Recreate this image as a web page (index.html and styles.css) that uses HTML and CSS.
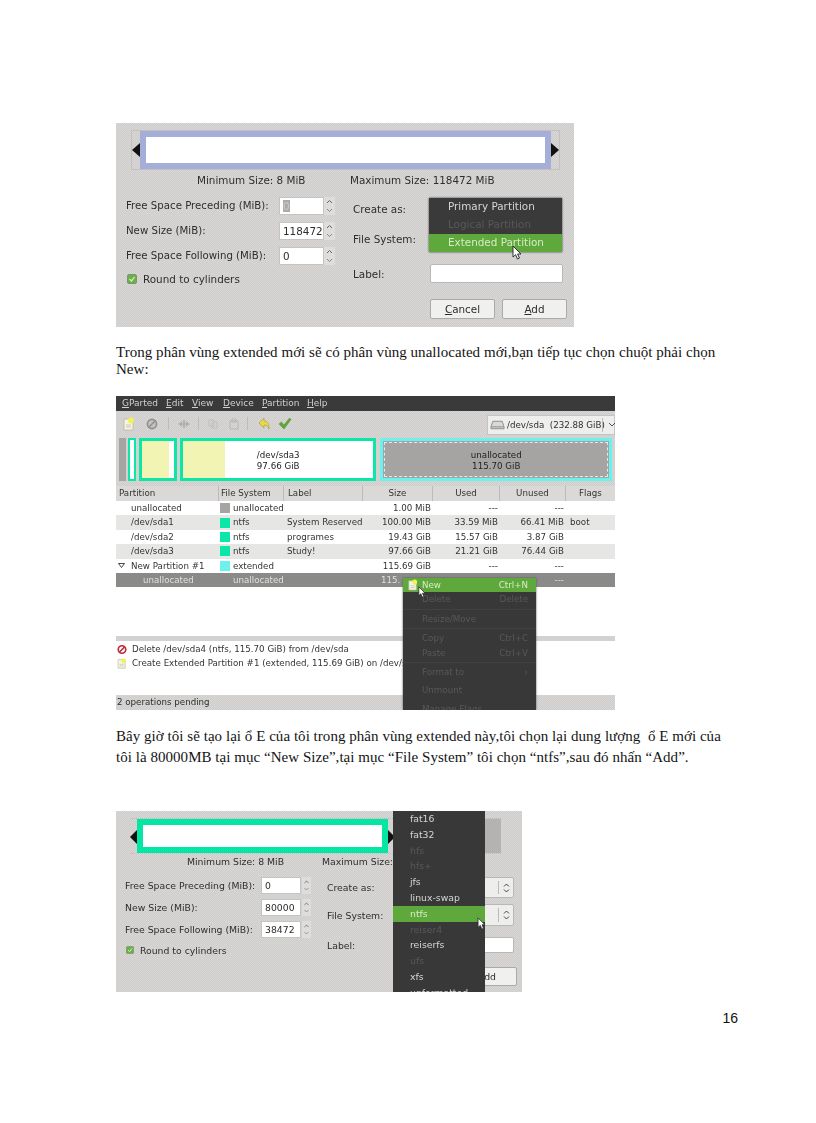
FILE: index.html
```html
<!DOCTYPE html>
<html lang="vi">
<head>
<meta charset="utf-8">
<title>Trang 16</title>
<link rel="stylesheet" href="styles.css">
</head>
<body>
<svg class="defs" width="0" height="0" aria-hidden="true">
  <symbol id="i-new" viewBox="0 0 12 14"><path d="M1 2h9v11H1z" fill="#f6f4e4" stroke="#b8b6a0" stroke-width=".8"/><circle cx="8" cy="3.500" r="3" fill="#f0f25a"/><path d="M3 8h5M3 10h5" stroke="#c9c7b0"/></symbol>
  <symbol id="i-cur" viewBox="0 0 10 15"><path d="M1 1v11l2.600-2.300 1.800 4.300 2-.9-1.800-4.100H9z" fill="#fff" stroke="#222" stroke-width=".9"/></symbol>
  <symbol id="i-check" viewBox="0 0 10 10"><rect x=".5" y=".5" width="9" height="9" rx="1.500" fill="#6cb04a" stroke="#79956b"/><path d="M2.500 5l2 2 3-4" fill="none" stroke="#d8efc8" stroke-width="1.200"/></symbol>
  <symbol id="i-spin" viewBox="0 0 11 18"><path d="M3 6l2.500-2.500L8 6" fill="none" stroke="#666"/><path d="M3 12l2.500 2.500L8 12" fill="none" stroke="#888"/></symbol>
</svg>

<section class="shot shot-a">
  <div class="bar-frame">
    <span class="arr arr-l"></span>
    <div class="part-blue"></div>
    <span class="arr arr-r"></span>
  </div>
  <div class="sizes">
    <span class="size-min">Minimum Size: 8 MiB</span>
    <span>Maximum Size: 118472 MiB</span>
  </div>
  <div class="form">
    <div class="col-left">
      <div class="spin-row"><span class="spin-label">Free Space Preceding (MiB):</span><span class="num"><span class="sel">0</span></span><svg class="spin"><use href="#i-spin"/></svg></div>
      <div class="spin-row"><span class="spin-label">New Size (MiB):</span><span class="num">118472</span><svg class="spin"><use href="#i-spin"/></svg></div>
      <div class="spin-row"><span class="spin-label">Free Space Following (MiB):</span><span class="num">0</span><svg class="spin"><use href="#i-spin"/></svg></div>
      <div class="check-row"><svg class="chk"><use href="#i-check"/></svg>Round to cylinders</div>
    </div>
    <div class="col-right">
      <div class="r-row r-create">Create as:</div>
      <div class="r-row r-file">File System:</div>
      <div class="r-row r-label"><span class="r-name">Label:</span><span class="entry"></span></div>
      <div class="btns"><span class="btn"><u>C</u>ancel</span><span class="btn"><u>A</u>dd</span></div>
      <div class="pop">
        <div class="pop-item">Primary Partition</div>
        <div class="pop-item dim">Logical Partition</div>
        <div class="pop-item on">Extended Partition</div>
        <svg class="cursor"><use href="#i-cur"/></svg>
      </div>
    </div>
  </div>
</section>

<p class="para para-a">Trong phân vùng extended mới sẽ có phân vùng unallocated mới,bạn tiếp tục chọn chuột phải chọn New:</p>

<section class="shot shot-b">
  <nav class="menubar"><span><u>G</u>Parted</span><span><u>E</u>dit</span><span><u>V</u>iew</span><span><u>D</u>evice</span><span><u>P</u>artition</span><span><u>H</u>elp</span></nav>
  <div class="toolbar">
    <svg class="t-new"><use href="#i-new"/></svg>
    <svg class="t-no" viewBox="0 0 12 12"><circle cx="6" cy="6" r="4.600" fill="#c4c3c1" stroke="#8e8e8c" stroke-width="1.600"/><path d="M3 9l6-6" stroke="#8e8e8c" stroke-width="1.400"/></svg>
    <i class="t-sep"></i>
    <svg class="t-rs" viewBox="0 0 14 12"><path d="M1 6l4-3v2h1V2h2v3h1V3l4 3-4 3V7H8v3H6V7H5v2z" fill="#b2b1af"/></svg>
    <i class="t-sep"></i>
    <svg class="t-cp" viewBox="0 0 12 12"><path d="M2 2h5v6H2zM5 4h5v6H5z" fill="none" stroke="#c0bfbd"/></svg>
    <svg class="t-ps" viewBox="0 0 12 12"><path d="M2 3h8v8H2zM4 1h4v3H4z" fill="none" stroke="#b8b7b5"/></svg>
    <i class="t-sep"></i>
    <svg class="t-undo" viewBox="0 0 12 14"><path d="M1 6l5-5v3c4 0 5 3 5 8-1-3-2-4-5-4v3z" fill="#e8d84a" stroke="#a89a30" stroke-width=".6"/></svg>
    <svg class="t-ok" viewBox="0 0 14 13"><path d="M1 7l2.500-2 2.500 3L11.500 1 13 2.500 6 12z" fill="#5fa83c" stroke="#4a8a2e" stroke-width=".5"/></svg>
    <div class="device">
      <svg class="hdd" viewBox="0 0 16 10"><path d="M3 1h10l2 6v2H1V7z" fill="#d8d8d8" stroke="#777" stroke-width=".8"/><path d="M1.500 7h13" stroke="#777" stroke-width=".8"/></svg>
      <span class="dev-text">/dev/sda&nbsp; (232.88 GiB)</span>
      <i class="dev-div"></i>
      <svg class="chev" viewBox="0 0 8 5"><path d="M1 1l3 3 3-3" fill="none" stroke="#555"/></svg>
    </div>
  </div>
  <div class="disk">
    <div class="seg seg-un"></div>
    <div class="seg seg-1"></div>
    <div class="seg seg-2"><span class="fill fill-2"></span></div>
    <div class="seg seg-3"><span class="fill fill-3"></span><span class="seg-text">/dev/sda3<br>97.66 GiB</span></div>
    <div class="seg seg-ext"><div class="seg-inner">unallocated<br>115.70 GiB</div></div>
  </div>
  <div class="table">
    <div class="row head"><span class="c-name">Partition</span><span class="c-fs">File System</span><span class="c-lab">Label</span><span class="c-h">Size</span><span class="c-h">Used</span><span class="c-h">Unused</span><span class="c-h">Flags</span></div>
    <div class="row"><span class="c-name">unallocated</span><span class="c-fs"><i class="sw sw-g"></i>unallocated</span><span></span><span class="c-n">1.00 MiB</span><span class="c-n">---</span><span class="c-n">---</span><span></span></div>
    <div class="row alt"><span class="c-name">/dev/sda1</span><span class="c-fs"><i class="sw sw-t"></i>ntfs</span><span class="c-lab">System Reserved</span><span class="c-n">100.00 MiB</span><span class="c-n">33.59 MiB</span><span class="c-n">66.41 MiB</span><span class="c-f">boot</span></div>
    <div class="row"><span class="c-name">/dev/sda2</span><span class="c-fs"><i class="sw sw-t"></i>ntfs</span><span class="c-lab">programes</span><span class="c-n">19.43 GiB</span><span class="c-n">15.57 GiB</span><span class="c-n">3.87 GiB</span><span></span></div>
    <div class="row alt"><span class="c-name">/dev/sda3</span><span class="c-fs"><i class="sw sw-t"></i>ntfs</span><span class="c-lab">Study!</span><span class="c-n">97.66 GiB</span><span class="c-n">21.21 GiB</span><span class="c-n">76.44 GiB</span><span></span></div>
    <div class="row"><span class="c-name c-tree"><svg class="tri" viewBox="0 0 7 5"><path d="M.5.5h6L3.500 4.500z" fill="none" stroke="#333" stroke-width=".9"/></svg>New Partition #1</span><span class="c-fs"><i class="sw sw-c"></i>extended</span><span></span><span class="c-n">115.69 GiB</span><span class="c-n">---</span><span class="c-n">---</span><span></span></div>
    <div class="row sel-row"><span class="c-name c-sub">unallocated</span><span class="c-fs c-fs-sub">unallocated</span><span></span><span class="c-n c-clip">115.</span><span></span><span class="c-n">---</span><span></span></div>
  </div>
  <div class="blank"></div>
  <div class="log">
    <div class="log-row"><svg class="log-ico" viewBox="0 0 12 12"><circle cx="6" cy="6" r="4.500" fill="#fff" stroke="#c02a3a" stroke-width="2"/><path d="M3 9l6-6" stroke="#c02a3a" stroke-width="2"/></svg>Delete /dev/sda4 (ntfs, 115.70 GiB) from /dev/sda</div>
    <div class="log-row"><svg class="log-ico"><use href="#i-new"/></svg>Create Extended Partition #1 (extended, 115.69 GiB) on /dev/sda</div>
  </div>
  <div class="status">2 operations pending</div>
  <div class="ctx">
    <div class="ctx-item on"><svg class="ctx-ico"><use href="#i-new"/></svg><span>New</span><span>Ctrl+N</span></div>
    <div class="ctx-item dim"><span>Delete</span><span>Delete</span></div>
    <hr class="ctx-sep">
    <div class="ctx-item dim"><span>Resize/Move</span></div>
    <hr class="ctx-sep">
    <div class="ctx-item dim"><span>Copy</span><span>Ctrl+C</span></div>
    <div class="ctx-item dim"><span>Paste</span><span>Ctrl+V</span></div>
    <hr class="ctx-sep">
    <div class="ctx-item dim"><span>Format to</span><span>›</span></div>
    <div class="ctx-item dim ctx-gap"><span>Unmount</span></div>
    <div class="ctx-item dim ctx-gap"><span>Manage Flags</span></div>
    <svg class="ctx-cur"><use href="#i-cur"/></svg>
  </div>
</section>

<p class="para para-b">Bây giờ tôi sẽ tạo lại ổ E của tôi trong phân vùng extended này,tôi chọn lại dung lượng &nbsp;ổ E mới của tôi là 80000MB tại mục “New Size”,tại mục “File System” tôi chọn “ntfs”,sau đó nhấn “Add”.</p>

<section class="shot shot-c">
  <div class="bar-frame3">
    <span class="arr arr-l3"></span>
    <div class="part-green"></div>
    <span class="arr arr-r3"></span>
    <div class="part-free"></div>
  </div>
  <div class="sizes3">
    <span class="size-min3">Minimum Size: 8 MiB</span>
    <span>Maximum Size:</span>
  </div>
  <div class="form3">
    <div class="col-left3">
      <div class="spin-row3"><span class="spin-label3">Free Space Preceding (MiB):</span><span class="num3">0</span><svg class="spin3"><use href="#i-spin"/></svg></div>
      <div class="spin-row3"><span class="spin-label3">New Size (MiB):</span><span class="num3">80000</span><svg class="spin3"><use href="#i-spin"/></svg></div>
      <div class="spin-row3"><span class="spin-label3">Free Space Following (MiB):</span><span class="num3">38472</span><svg class="spin3"><use href="#i-spin"/></svg></div>
      <div class="check-row3"><svg class="chk3"><use href="#i-check"/></svg>Round to cylinders</div>
    </div>
    <div class="col-right3">
      <div class="r3 r3-a"><span class="r3-name">Create as:</span><span class="combo"><svg class="combo-arr" viewBox="0 0 7 12"><path d="M1 4.500l2.500-2.500L6 4.500M1 7.500L3.500 10 6 7.500" fill="none" stroke="#444"/></svg></span></div>
      <div class="r3 r3-b"><span class="r3-name">File System:</span><span class="combo"><svg class="combo-arr" viewBox="0 0 7 12"><path d="M1 4.500l2.500-2.500L6 4.500M1 7.500L3.500 10 6 7.500" fill="none" stroke="#444"/></svg></span></div>
      <div class="r3 r3-c"><span class="r3-name">Label:</span><span class="entry3"></span></div>
      <div class="btns3"><span class="btn3">Add</span></div>
    </div>
  </div>
  <div class="fs-menu">
    <div class="fs-item">fat16</div>
    <div class="fs-item">fat32</div>
    <div class="fs-item dim">hfs</div>
    <div class="fs-item dim">hfs+</div>
    <div class="fs-item">jfs</div>
    <div class="fs-item">linux-swap</div>
    <div class="fs-item on">ntfs</div>
    <div class="fs-item dim">reiser4</div>
    <div class="fs-item">reiserfs</div>
    <div class="fs-item dim">ufs</div>
    <div class="fs-item">xfs</div>
    <div class="fs-item">unformatted</div>
  </div>
  <svg class="cursor3"><use href="#i-cur"/></svg>
</section>

<footer class="page-num">16</footer>
</body>
</html>
```
FILE: styles.css
```css
* { box-sizing: border-box; }
html, body { margin: 0; padding: 0; background: #fff; }
body { width: 816px; height: 1123px; padding: 123px 0 0 116px; overflow: hidden; font-family: "Liberation Serif", serif; color: #111; }
.defs { position: absolute; }
svg { display: block; flex: none; }
i { display: block; flex: none; }
.dim { color: #585858; }

.para { margin: 0; width: 612px; font-size: 15px; letter-spacing: .04px; color: #141414; }
.para-a { margin-top: 16.500px; margin-bottom: 18.500px; line-height: 17px; }
.para-b { margin-top: 15.500px; margin-bottom: 43.500px; line-height: 21px; }

.shot { position: relative; background: repeating-conic-gradient(#d8d7d5 0 25%, #cecdcb 0 50%) 0 0 / 2px 2px; font-family: "DejaVu Sans", sans-serif; color: #2e2e2e; white-space: nowrap; overflow: hidden; filter: blur(.3px); }

/* first dialog */
.shot-a { width: 458px; height: 204px; padding-top: 7px; font-size: 10.400px; }
.bar-frame { position: relative; width: 429px; height: 40px; margin-left: 15px; padding: 0 8px; border: 1px solid #c2c1bf; }
.part-blue { height: 38px; border: 6px solid #a4aed8; background: #fff; }
.arr { position: absolute; width: 0; height: 0; border-top: 7px solid transparent; border-bottom: 7px solid transparent; }
.arr-l { left: 0; top: 12px; border-right: 8px solid #111; }
.arr-r { right: 0; top: 12px; border-left: 8px solid #111; }
.sizes { display: flex; margin-top: 3px; padding-left: 81px; height: 14px; line-height: 14px; }
.size-min { width: 153px; }
.form { display: flex; margin-top: 10px; padding-left: 10px; }
.col-left { width: 227px; display: flex; flex-direction: column; gap: 7px; }
.spin-row { display: flex; align-items: center; height: 18px; }
.spin-label { width: 153px; font-size: 10.200px; padding-bottom: 2px; }
.num { width: 45px; height: 18px; background: #fff; border: 1px solid #c4c4c2; padding: 0 3px; line-height: 16px; }
.sel { background: #aaa; color: #ccc; }
.spin { width: 11px; height: 18px; background: #dedddb; }
.check-row { display: flex; align-items: center; gap: 6px; height: 14px; padding-left: 1px; }
.chk { width: 10px; height: 10px; }
.col-right { position: relative; width: 214px; }
.r-row { display: flex; align-items: center; }
.r-create { height: 24px; }
.r-file { height: 24px; margin-top: 6px; }
.r-label { height: 19px; margin-top: 13px; }
.r-name { width: 77px; }
.entry { width: 133px; height: 19px; background: #fff; border: 1px solid #b8b8b6; border-radius: 2px; }
.btns { display: flex; justify-content: flex-end; gap: 7px; margin-top: 16px; }
.btn { width: 65px; height: 20px; line-height: 18px; text-align: center; background: #f0f0ee; border: 1px solid #aaa; border-radius: 2px; }
.pop { position: absolute; left: 76px; top: 1px; width: 133px; height: 54px; background: #3a3a3a; box-shadow: 0 0 2px #333; color: #d6d6d6; }
.pop-item { height: 18px; line-height: 17px; padding-left: 19px; }
.pop-item.dim { color: #585858; }
.pop-item.on { background: #5fa83c; color: #d6ecc6; }
.cursor { position: absolute; left: 83px; top: 47px; width: 10px; height: 15px; }

/* gparted */
.shot-b { width: 499px; height: 314px; background: #fff; font-size: 8.700px; }
.menubar { display: flex; height: 15px; line-height: 15px; background: #3a3a3a; color: #d0d0d0; padding-left: 6px; font-size: 9px; }
.menubar span:nth-child(1) { width: 44px; }
.menubar span:nth-child(2) { width: 26px; }
.menubar span:nth-child(3) { width: 31px; }
.menubar span:nth-child(4) { width: 39px; }
.menubar span:nth-child(5) { width: 45px; }
.toolbar { display: flex; align-items: center; height: 25px; background: repeating-conic-gradient(#d8d7d5 0 25%, #cecdcb 0 50%) 0 0 / 2px 2px; padding-left: 7px; }
.t-new { width: 12px; height: 14px; }
.t-no { width: 12px; height: 12px; margin-left: 11px; }
.t-sep { width: 1px; height: 13px; background: #bdbcba; margin-left: 10px; }
.t-rs { width: 14px; height: 12px; margin-left: 8px; }
.t-rs + .t-sep { margin-left: 7px; }
.t-cp { width: 12px; height: 12px; margin-left: 8px; }
.t-ps { width: 12px; height: 12px; margin-left: 9px; }
.t-ps + .t-sep { margin-left: 7px; }
.t-undo { width: 12px; height: 14px; margin-left: 10px; }
.t-ok { width: 14px; height: 13px; margin-left: 8px; }
.device { display: flex; align-items: center; width: 128px; height: 20px; margin-left: auto; margin-top: 2px; padding-left: 2px; background: #eeeeec; border: 1px solid #c4c4c2; }
.hdd { width: 15px; height: 10px; }
.dev-text { margin-left: 2px; width: 95px; }
.dev-div { width: 1px; height: 14px; background: #bbb; }
.chev { width: 8px; height: 5px; margin-left: 5px; }
.disk { display: flex; height: 50px; padding: 2px 3px; background: repeating-conic-gradient(#d8d7d5 0 25%, #cecdcb 0 50%) 0 0 / 2px 2px; gap: 2px; }
.seg { height: 43px; border: 3px solid #0ce6a6; background: #fff; position: relative; display: flex; }
.seg-un { width: 7px; border: 0; background: #a5a4a2; }
.seg-1 { width: 8px; border-width: 2px; }
.seg-2 { width: 38px; margin-left: 1px; }
.seg-3 { width: 197px; margin-left: 1px; }
.fill { display: block; height: 100%; background: #f1f4b2; }
.fill-2 { width: 27px; }
.fill-3 { width: 42px; }
.seg-text { position: absolute; left: 0; right: 0; top: 9px; text-align: center; line-height: 11px; color: #222; }
.seg-ext { width: 232px; margin-left: 2px; border-color: #6cf2ee; background: #a5a4a2; padding: 1px; }
.seg-inner { flex: 1; border: 1px dashed #e8e8e8; text-align: center; color: #222; line-height: 11px; padding-top: 7px; }
.table { line-height: 14.400px; }
.row { display: grid; grid-template-columns: 102px 65px 79px 70px 67px 66px 50px; height: 14.400px; color: #333; }
.row.alt { background: #e6e6e4; }
.row.head { background: #dad9d7; height: 15px; }
.head span + span { border-left: 1px solid #bbb; }
.c-name { padding-left: 15px; }
.head .c-name { padding-left: 3px; }
.c-tree { display: flex; align-items: center; padding-left: 2px; }
.tri { width: 7px; height: 5px; margin-right: 6px; }
.c-sub { padding-left: 27px; }
.c-fs { display: flex; align-items: center; padding-left: 2px; }
.c-fs-sub { padding-left: 15px; }
.c-lab { padding-left: 4px; }
.c-n { text-align: right; padding-right: 1px; }
.c-clip { text-align: left; padding-left: 19px; }
.c-h { text-align: center; }
.c-f { padding-left: 5px; }
.sw { width: 10px; height: 10px; margin-right: 3px; }
.sw-g { background: #a5a4a2; }
.sw-t { background: #0ce6a6; }
.sw-c { background: #6cf2ee; }
.sel-row { background: #8a8a88; color: #e0e0e0; }
.blank { height: 49px; }
.log { height: 59px; border-top: 5px solid #d3d2d0; }
.log-row { display: flex; align-items: center; gap: 5px; height: 14px; padding-left: 1px; color: #333; }
.log-row:first-child { margin-top: 1px; }
.log-ico { width: 10px; height: 11px; }
.status { height: 15px; line-height: 15px; background: repeating-conic-gradient(#d8d7d5 0 25%, #cecdcb 0 50%) 0 0 / 2px 2px; padding-left: 1px; }
.ctx { position: absolute; left: 287px; top: 182px; width: 133px; height: 132px; overflow: hidden; background: #383838; box-shadow: 0 0 2px #555; }
.ctx-item { position: relative; display: flex; justify-content: space-between; height: 14.400px; line-height: 14.400px; padding: 0 8px 0 19px; }
.ctx-item.on { background: #5fa83c; color: #d6ecc6; }
.ctx-sep { height: 1px; margin: 2px 0; border: 0; background: #424242; }
.ctx-gap { margin-top: 4px; }
.ctx-ico { position: absolute; left: 5px; top: 1px; width: 10px; height: 12px; }
.ctx-cur { position: absolute; left: 15px; top: 8px; width: 8px; height: 12px; }

/* third dialog */
.shot-c { width: 406px; height: 181px; padding-top: 7px; font-size: 9.300px; }
.bar-frame3 { position: relative; display: flex; width: 370px; height: 36px; margin-left: 15px; padding-left: 6px; border-top: 1px dotted #bbb; border-bottom: 1px dotted #bbb; }
.part-green { width: 251px; height: 34px; border: 6px solid #03e6a4; background: #fff; }
.part-free { width: 105px; margin-left: 8px; background: #b4b3b1; }
.arr-l3 { left: -1px; top: 11px; border-right: 7px solid #111; }
.arr-r3 { left: 257px; top: 11px; border-left: 7px solid #111; }
.sizes3 { display: flex; margin-top: 1px; padding-left: 71px; height: 14px; line-height: 14px; }
.size-min3 { width: 135px; }
.form3 { display: flex; margin-top: 8px; padding-left: 9px; }
.col-left3 { width: 202px; display: flex; flex-direction: column; gap: 5px; }
.spin-row3 { display: flex; align-items: center; height: 17px; }
.spin-label3 { width: 136px; padding-bottom: 1px; }
.num3 { width: 40px; height: 17px; line-height: 15px; padding: 0 3px; background: #fff; border: 1px solid #c4c4c2; }
.spin3 { width: 9px; height: 17px; margin-left: 1px; background: #dedddb; }
.check-row3 { display: flex; align-items: center; gap: 6px; height: 14px; padding-left: 1px; }
.chk3 { width: 8px; height: 8px; }
.col-right3 { width: 190px; }
.r3 { display: flex; align-items: center; }
.r3-a { height: 21px; }
.r3-b { height: 22px; margin-top: 6px; }
.r3-c { height: 16px; margin-top: 11px; }
.r3-name { width: 104px; }
.combo { position: relative; width: 83px; height: 100%; background: #eeeeec; border: 1px solid #b8b8b6; border-radius: 2px; }
.combo-arr { position: absolute; right: 3px; top: 4px; width: 7px; height: 12px; }
.combo::before { content: ""; position: absolute; right: 14px; top: 3px; bottom: 3px; width: 1px; background: #bbb; }
.entry3 { width: 83px; height: 16px; background: #fff; border: 1px solid #b8b8b6; border-radius: 2px; }
.btns3 { display: flex; justify-content: flex-end; margin-top: 14px; }
.btn3 { width: 60px; height: 19px; line-height: 17px; text-align: center; background: #f0f0ee; border: 1px solid #aaa; border-radius: 2px; }
.fs-menu { position: absolute; left: 277px; top: 0; width: 92px; height: 181px; overflow: hidden; background: #383838; color: #d6d6d6; }
.fs-item { height: 15.800px; line-height: 15.800px; padding-left: 17px; }
.fs-item.dim { color: #585858; }
.fs-item.on { background: #5fa83c; color: #d6ecc6; }
.cursor3 { position: absolute; left: 361px; top: 106px; width: 9px; height: 13px; }

.page-num { width: 622px; margin-top: 18px; text-align: right; font-family: "Liberation Sans", sans-serif; font-size: 14px; line-height: 16px; color: #111; }
```
